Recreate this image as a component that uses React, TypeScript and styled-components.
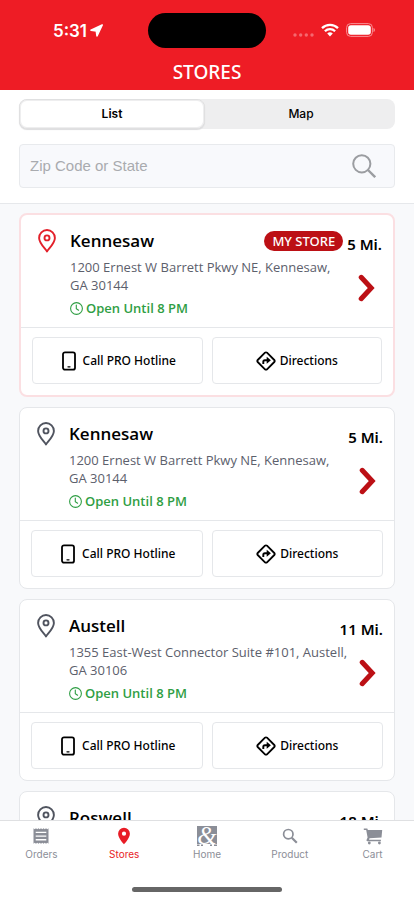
import React from "react";
import styled, { createGlobalStyle } from "styled-components";

const GlobalStyle = createGlobalStyle`
  *, *::before, *::after { box-sizing: border-box; }
  body { margin: 0; background: #ffffff; font-family: "Open Sans", "Noto Sans", sans-serif; color: #000000; }
  button, input { font: inherit; color: inherit; margin: 0; }
  h1, h2, p { margin: 0; }
`;

const UI_FONT = `Inter, "Liberation Sans", sans-serif`;

const Screen = styled.div`
  display: flex;
  flex-direction: column;
  height: 100vh;
  overflow: hidden;
`;

const Header = styled.header`
  flex: none;
  background: #ee1c25;
  color: #ffffff;
  padding: 13px 0 6px;
`;

const StatusBar = styled.div`
  display: grid;
  grid-template-columns: 1fr 118px 1fr;
  align-items: center;
  height: 35px;
`;

const Clock = styled.div`
  display: flex;
  align-items: center;
  justify-content: center;
  gap: 3px;
  padding-left: 8px;
  font: 600 17px/20px ${UI_FONT};
`;

const Island = styled.div`
  height: 35px;
  border-radius: 18px;
  background: #000000;
`;

const Signals = styled.div`
  display: flex;
  align-items: flex-end;
  justify-content: flex-end;
  gap: 7px;
  padding: 0 39px 1px 0;
`;

const Title = styled.h1`
  margin-top: 12px;
  text-align: center;
  font-family: "Noto Sans", sans-serif;
  font-size: 19px;
  font-weight: 500;
  line-height: 24px;
`;

const Filters = styled.div`
  flex: none;
  display: grid;
  gap: 15px;
  padding: 9px 19px 15px;
  border-bottom: 1px solid #e6e8eb;
`;

const Segments = styled.div`
  display: grid;
  grid-template-columns: 1fr 1fr;
  height: 30px;
  border-radius: 8px;
  background: #eeeeef;
`;

const Segment = styled.button<{ $active?: boolean }>`
  border: ${(p) => (p.$active ? "1px solid #e0e0e1" : "0")};
  border-radius: 8px;
  margin: ${(p) => (p.$active ? "0 2px 0 0" : "0")};
  padding: 0;
  background: ${(p) => (p.$active ? "#ffffff" : "transparent")};
  box-shadow: ${(p) => (p.$active ? "inset 0 0 0 1px #eeeeef, 0 1px 1px #dcdcde" : "none")};
  font: ${(p) => (p.$active ? 600 : 500)} 12px/16px ${UI_FONT};
`;

const SearchBox = styled.label`
  display: flex;
  align-items: center;
  height: 44px;
  padding: 0 18px 0 10px;
  border: 1px solid #e8eaed;
  border-radius: 4px;
  background: #f8f9fc;
`;

const SearchInput = styled.input`
  flex: 1;
  min-width: 0;
  border: 0;
  padding: 0;
  outline: none;
  background: transparent;
  font: 400 15px/20px "Liberation Sans", sans-serif;
  &::placeholder { color: #a9abaf; opacity: 1; }
`;

const StoreList = styled.main`
  flex: 1;
  min-height: 0;
  display: flex;
  flex-direction: column;
  gap: 10px;
  padding: 9px 19px;
  overflow-y: auto;
  scrollbar-width: none;
  background: #f8f9fb;
`;

const Card = styled.article<{ $mine?: boolean }>`
  flex: none;
  border: ${(p) => (p.$mine ? "2px solid #fbdfe2" : "1px solid #e5e7ea")};
  border-radius: 8px;
  background: #ffffff;
`;

const Info = styled.div`
  display: grid;
  grid-template-columns: 32px 1fr;
  padding: 13px 11px 10px 17px;
`;

const PinSlot = styled.div`
  padding-top: 1px;
`;

const Heading = styled.div`
  display: flex;
  align-items: center;
  height: 26px;
`;

const StoreName = styled.h2`
  flex: 1;
  font-size: 17px;
  font-weight: 600;
  line-height: 26px;
`;

const Badge = styled.span`
  padding: 0 8px;
  border-radius: 10px;
  background: #bc1015;
  color: #ffffff;
  font-family: "Noto Sans", sans-serif;
  font-size: 13px;
  font-weight: 500;
  line-height: 20px;
`;

const Distance = styled.span`
  align-self: flex-end;
  padding-left: 4px;
  font-family: "Noto Sans", sans-serif;
  font-size: 15px;
  font-weight: 600;
  line-height: 20px;
`;

const Details = styled.div`
  display: flex;
  align-items: center;
  justify-content: space-between;
`;

const Address = styled.p`
  padding-top: 4px;
  color: #5c606c;
  font-size: 13px;
  line-height: 18px;
  white-space: pre-line;
`;

const Hours = styled.p`
  display: flex;
  align-items: center;
  gap: 3px;
  padding-top: 5px;
  color: #2f9e44;
  font-size: 13px;
  font-weight: 600;
  line-height: 18px;
`;

const OpenButton = styled.button`
  flex: none;
  display: flex;
  padding: 0;
  margin: 4px 6px 0 -8px;
  border: 0;
  background: transparent;
`;

const Actions = styled.div`
  display: grid;
  grid-template-columns: 1fr 1fr;
  gap: 9px;
  padding: 9px 11px 11px;
  border-top: 1px solid #e5e7ea;
`;

const Action = styled.button`
  display: flex;
  align-items: center;
  justify-content: center;
  gap: 4px;
  height: 47px;
  padding: 0;
  border: 1px solid #e5e7ea;
  border-radius: 4px;
  background: #ffffff;
  font-family: "Noto Sans", sans-serif;
  font-size: 12px;
  font-weight: 500;
`;

const TabBar = styled.nav`
  flex: none;
  display: grid;
  grid-template-columns: repeat(5, 1fr);
  padding-top: 5px;
  border-top: 1px solid #dfe0e2;
  background: #ffffff;
`;

const Tab = styled.a<{ $active?: boolean }>`
  display: flex;
  flex-direction: column;
  align-items: center;
  gap: 1px;
  color: ${(p) => (p.$active ? "#e81c26" : "#8b8e97")};
  font: 400 10px/14px ${UI_FONT};
  text-decoration: none;
`;

const HomeIndicator = styled.div`
  flex: none;
  align-self: center;
  width: 36%;
  height: 5px;
  margin: 26px 0 8px;
  border-radius: 3px;
  background: #666666;
`;

const LocationArrow = () => (
  <svg width="13" height="13" viewBox="0 0 13 13" fill="#fff" stroke="#fff" strokeLinejoin="round" aria-hidden="true">
    <path d="M12.200 1 1 6.200 6.300 6.900 7 12Z" strokeWidth="1.600" />
  </svg>
);

const Dots = () => (
  <svg width="21" height="4" viewBox="0 0 21 4" fill="#f5686f" aria-hidden="true">
    <circle cx="2" cy="2" r="1.700" />
    <circle cx="7.700" cy="2" r="1.700" />
    <circle cx="13.300" cy="2" r="1.700" />
    <circle cx="19" cy="2" r="1.700" />
  </svg>
);

const Wifi = () => (
  <svg width="18" height="14" viewBox="0 0 18 14" fill="none" stroke="#fff" strokeWidth="2.300" aria-hidden="true">
    <path d="M1 5.100a11.500 11.500 0 0 1 16 0" />
    <path d="M3.900 8.300a7.300 7.300 0 0 1 10.200 0" />
    <path d="M6.200 10.500a4 4 0 0 1 5.600 0L9 13.400Z" fill="#fff" stroke="none" />
  </svg>
);

const Battery = () => (
  <svg width="29" height="14" viewBox="0 0 29 14" fill="none" aria-hidden="true">
    <rect x=".6" y=".6" width="25.800" height="12.800" rx="4" stroke="#f98f94" />
    <rect x="2.200" y="2.200" width="22.600" height="9.600" rx="2.700" fill="#fff" />
    <path d="M27.500 5v4c1-.3 1.400-1 1.400-2s-.4-1.700-1.400-2Z" fill="#f98f94" />
  </svg>
);

const Magnifier = () => (
  <svg width="24" height="24" viewBox="0 0 24 24" fill="none" stroke="#9b9da1" strokeWidth="2" aria-hidden="true">
    <circle cx="9.800" cy="9.800" r="8.600" />
    <path d="m16 16 7.200 7.200" strokeWidth="2.400" />
  </svg>
);

const Pin = ({ color }: { color: string }) => (
  <svg width="18" height="24" viewBox="0 0 18 24" fill="none" stroke={color} strokeWidth="1.900" aria-hidden="true">
    <path d="M9 22.400C6.800 19.200 1.100 13.900 1.100 8.900a7.900 7.900 0 0 1 15.800 0c0 5-5.700 10.300-7.900 13.500Z" strokeLinejoin="round" />
    <circle cx="9" cy="8.900" r="2.500" />
  </svg>
);

const ClockIcon = () => (
  <svg width="13" height="13" viewBox="0 0 13 13" fill="none" stroke="#2f9e44" strokeWidth="1.100" strokeLinecap="round" aria-hidden="true">
    <circle cx="6.500" cy="6.500" r="5.900" />
    <path d="M6.300 3v3.600l2.300 1.600" />
  </svg>
);

const Chevron = () => (
  <svg width="18" height="28" viewBox="0 0 18 28" fill="none" stroke="#bc1015" strokeWidth="5" strokeLinecap="round" strokeLinejoin="miter" aria-hidden="true">
    <path d="M3.200 3.300 13.200 14 3.200 24.700" />
  </svg>
);

const Phone = () => (
  <svg width="20" height="20" viewBox="0 0 20 20" fill="none" stroke="#000" strokeWidth="1.800" strokeLinecap="round" aria-hidden="true">
    <rect x="4" y="1.300" width="12" height="17.400" rx="2" />
    <path d="M9 15.800h2" strokeWidth="1.300" />
  </svg>
);

const DirectionSign = () => (
  <svg width="20" height="20" viewBox="0 0 20 20" fill="none" stroke="#000" aria-hidden="true">
    <path d="M9 1.700 1.700 9a1.400 1.400 0 0 0 0 2L9 18.300a1.400 1.400 0 0 0 2 0l7.300-7.300a1.400 1.400 0 0 0 0-2L11 1.700a1.400 1.400 0 0 0-2 0Z" strokeWidth="1.800" />
    <path d="M7.300 13v-2.200c0-1 .6-1.600 1.600-1.600h2.500" strokeWidth="1.900" />
    <path d="M10.700 5.700 14.900 9.200l-4.200 3.500Z" fill="#000" stroke="none" />
  </svg>
);

const ReceiptIcon = () => (
  <svg width="20" height="20" viewBox="0 0 20 20" fill="currentColor" aria-hidden="true">
    <path fillRule="evenodd" d="m2.500 2.200 1.200 1 1.300-1 1.200 1 1.300-1 1.200 1 1.300-1 1.300 1 1.200-1 1.300 1 1.200-1 1.300 1 1.200-1v15.600l-1.200-1-1.300 1-1.200-1-1.300 1-1.200-1-1.300 1-1.300-1-1.200 1-1.300-1-1.200 1-1.300-1-1.200 1ZM4.700 5.700v1.400h10.600V5.700Zm0 3.700v1.400h10.600V9.400Zm0 3.600v1.400h10.600V13Z" />
  </svg>
);

const PinFilled = () => (
  <svg width="20" height="20" viewBox="0 0 20 20" fill="currentColor" aria-hidden="true">
    <path fillRule="evenodd" d="M10 1.800a5.900 5.900 0 0 0-5.900 5.900c0 4.400 5.900 10.600 5.900 10.600s5.900-6.200 5.900-10.600A5.900 5.900 0 0 0 10 1.800Zm0 8a2.100 2.100 0 1 1 0-4.200 2.100 2.100 0 0 1 0 4.200Z" />
  </svg>
);

const HomeLogo = () => (
  <svg width="20" height="20" viewBox="0 0 20 20" aria-hidden="true">
    <rect width="20" height="18" fill="currentColor" />
    <path d="M0 19.300h2.500M4 19.300h2M13 19.300h2M17 19.300h3" stroke="currentColor" strokeWidth="1.400" />
    <text x="10" y="18" textAnchor="middle" fill="#fff" fontFamily="Liberation Serif, serif" fontStyle="italic" fontSize="25">&amp;</text>
  </svg>
);

const SearchIcon = () => (
  <svg width="20" height="20" viewBox="0 0 20 20" fill="none" stroke="currentColor" aria-hidden="true">
    <circle cx="8.300" cy="8.200" r="4.700" strokeWidth="1.700" />
    <path d="m11.800 11.700 5 5" strokeWidth="2.200" />
  </svg>
);

const CartIcon = () => (
  <svg width="20" height="20" viewBox="0 0 20 20" fill="currentColor" aria-hidden="true">
    <path d="M.8 2.500h3.500l.6 1.400h14.300l-.7 7.500-12 .9-.4 1.500h11.800v1.400H4.400c-.8 0-1.100-.7-.8-1.400l1-2.300L3.200 4H.8Z" />
    <circle cx="6.300" cy="17" r="1.400" />
    <circle cx="16.400" cy="17" r="1.400" />
  </svg>
);

type Store = { id: number; name: string; address?: string; distance: string; mine?: boolean };

const stores: Store[] = [
  { id: 1, name: "Kennesaw", address: "1200 Ernest W Barrett Pkwy NE, Kennesaw,\nGA 30144", distance: "5 Mi.", mine: true },
  { id: 2, name: "Kennesaw", address: "1200 Ernest W Barrett Pkwy NE, Kennesaw,\nGA 30144", distance: "5 Mi." },
  { id: 3, name: "Austell", address: "1355 East-West Connector Suite #101, Austell,\nGA 30106", distance: "11 Mi." },
  { id: 4, name: "Roswell", distance: "18 Mi." },
];

const tabs = [
  { label: "Orders", icon: <ReceiptIcon /> },
  { label: "Stores", icon: <PinFilled />, active: true },
  { label: "Home", icon: <HomeLogo /> },
  { label: "Product", icon: <SearchIcon /> },
  { label: "Cart", icon: <CartIcon /> },
];

const StoreCard = ({ store }: { store: Store }) => (
  <Card $mine={store.mine}>
    <Info>
      <PinSlot>
        <Pin color={store.mine ? "#e3202a" : "#50545f"} />
      </PinSlot>
      <div>
        <Heading>
          <StoreName>{store.name}</StoreName>
          {store.mine && <Badge>MY STORE</Badge>}
          <Distance>{store.distance}</Distance>
        </Heading>
        {store.address && (
          <Details>
            <div>
              <Address>{store.address}</Address>
              <Hours>
                <ClockIcon />
                Open Until 8 PM
              </Hours>
            </div>
            <OpenButton type="button" aria-label={`View ${store.name}`}>
              <Chevron />
            </OpenButton>
          </Details>
        )}
      </div>
    </Info>
    {store.address && (
      <Actions>
        <Action type="button">
          <Phone />
          Call PRO Hotline
        </Action>
        <Action type="button">
          <DirectionSign />
          Directions
        </Action>
      </Actions>
    )}
  </Card>
);

export default function App() {
  return (
    <>
      <GlobalStyle />
      <Screen>
        <Header>
          <StatusBar>
            <Clock>
              5:31
              <LocationArrow />
            </Clock>
            <Island />
            <Signals>
              <Dots />
              <Wifi />
              <Battery />
            </Signals>
          </StatusBar>
          <Title>STORES</Title>
        </Header>
        <Filters>
          <Segments>
            <Segment type="button" $active aria-pressed="true">List</Segment>
            <Segment type="button" aria-pressed="false">Map</Segment>
          </Segments>
          <SearchBox>
            <SearchInput type="text" placeholder="Zip Code or State" aria-label="Zip Code or State" />
            <Magnifier />
          </SearchBox>
        </Filters>
        <StoreList>
          {stores.map((store) => (
            <StoreCard key={store.id} store={store} />
          ))}
        </StoreList>
        <TabBar>
          {tabs.map((tab) => (
            <Tab key={tab.label} href="#" $active={tab.active}>
              {tab.icon}
              {tab.label}
            </Tab>
          ))}
        </TabBar>
        <HomeIndicator />
      </Screen>
    </>
  );
}
